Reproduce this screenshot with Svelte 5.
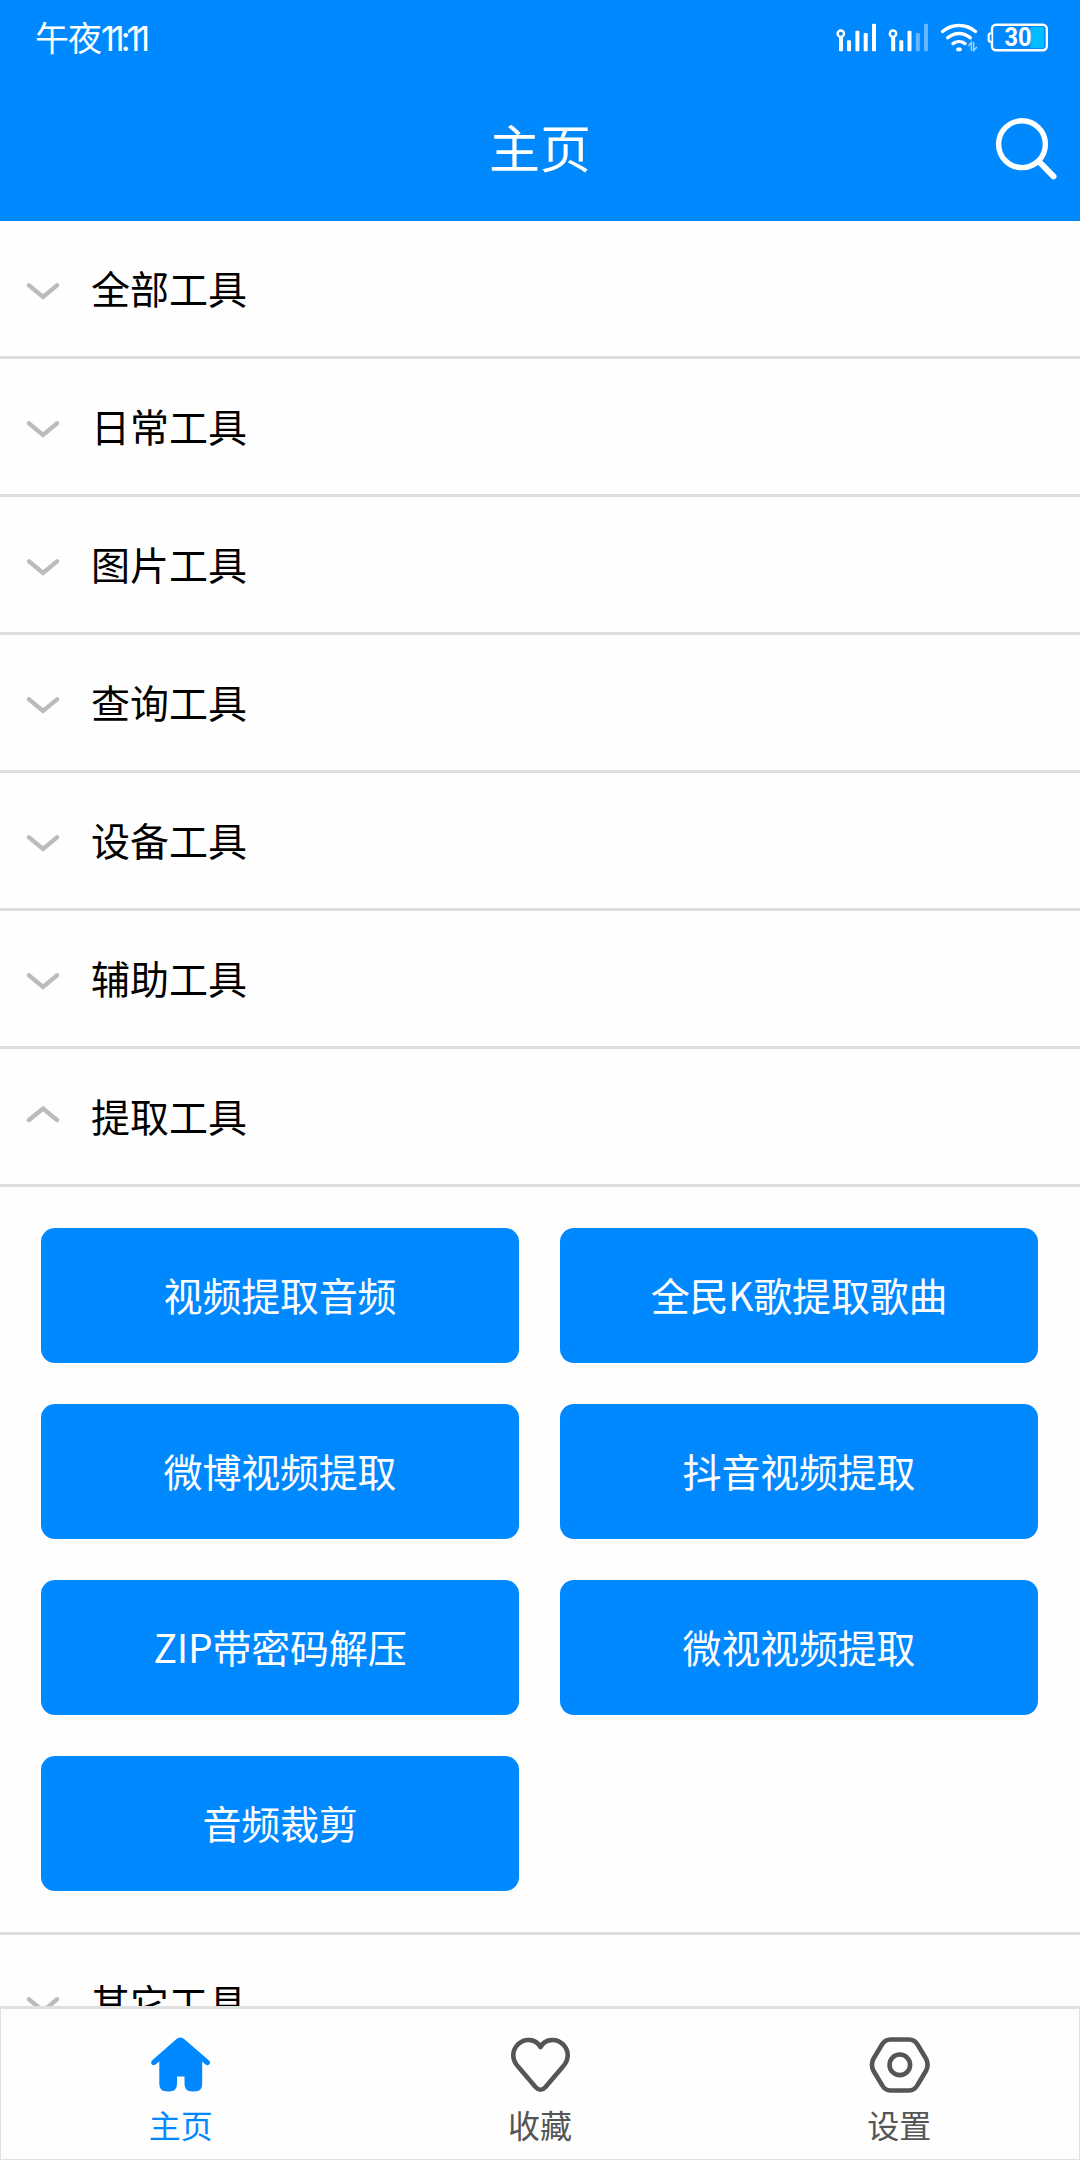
<script lang="ts">
  const before = [
    "全部工具",
    "日常工具",
    "图片工具",
    "查询工具",
    "设备工具",
    "辅助工具",
  ];

  let groups = $state([
    ...before.map((name) => ({ name, open: false, tools: [] as string[] })),
    {
      name: "提取工具",
      open: true,
      tools: [
        "视频提取音频",
        "全民K歌提取歌曲",
        "微博视频提取",
        "抖音视频提取",
        "ZIP带密码解压",
        "微视视频提取",
        "音频裁剪",
      ],
    },
    { name: "其它工具", open: false, tools: [] as string[] },
  ]);

  const tabs = [
    { id: "home", label: "主页" },
    { id: "fav", label: "收藏" },
    { id: "settings", label: "设置" },
  ];
  let active = $state("home");
</script>

<div class="screen">
  <header>
    <div class="status">
      <span class="time">午夜<span class="digits">11:11</span></span>
      <svg class="indicators" width="216" height="36" viewBox="834 20 216 36">
        <!-- signal 1 -->
        <g fill="#fff">
          <circle cx="840.8" cy="33.7" r="3.2" fill="none" stroke="#fff" stroke-width="2.4" />
          <rect x="839" y="37" width="4" height="14.3" rx="1" />
          <rect x="847" y="40.3" width="4" height="11" rx="1" />
          <rect x="855.4" y="30.8" width="4" height="20.5" rx="1" />
          <rect x="863.7" y="33" width="4" height="18.3" rx="1" />
          <rect x="872" y="23.8" width="4" height="27.5" rx="1" />
        </g>
        <!-- signal 2 -->
        <g fill="#fff">
          <circle cx="893" cy="33.7" r="3.2" fill="none" stroke="#fff" stroke-width="2.4" />
          <rect x="891.2" y="37" width="4" height="14.3" rx="1" />
          <rect x="899.3" y="40.3" width="4" height="11" rx="1" />
          <rect x="907.5" y="30.8" width="4" height="20.5" rx="1" />
          <rect x="915.8" y="33" width="4" height="18.3" rx="1" opacity="0.4" />
          <rect x="924" y="23.8" width="4" height="27.5" rx="1" opacity="0.4" />
        </g>
        <!-- wifi -->
        <g fill="none" stroke="#fff" stroke-width="3.4" stroke-linecap="round">
          <path d="M942.5 31.5C952 23.5 966 23.5 975.5 31.5" />
          <path d="M947.7 37.8C954.5 32 963.5 32 970.3 37.8" />
          <path d="M953 43.6C956.5 41 961.5 41 965 43.6" />
        </g>
        <rect x="956.2" y="47.5" width="5.6" height="3.8" rx="1.6" fill="#fff" />
        <path d="M971.4 51V42.5L968.2 46M973.7 42V50.5L976.9 47" fill="none" stroke="#9fd3ff" stroke-width="1.5" />
        <!-- battery -->
        <rect x="1030.5" y="27" width="13.5" height="21" fill="#00bbff" />
        <rect x="992" y="24.8" width="54.8" height="25.4" rx="4" fill="none" stroke="#fff" stroke-width="2.4" />
        <path d="M991.5 33.5H990Q988.7 33.5 988.7 35V40Q988.7 41.6 990 41.6H991.5" fill="#0088ff" stroke="#fff" stroke-width="2.2" />
        <text x="1018" y="46.2" text-anchor="middle" textLength="27" lengthAdjust="spacingAndGlyphs">30</text>
      </svg>
    </div>
    <div class="bar">
      <h1>主页</h1>
      <button class="search" aria-label="搜索">
        <svg width="64" height="64" viewBox="0 0 64 64" fill="none" stroke="#fff" stroke-linecap="round">
          <circle cx="28" cy="27.2" r="23.4" stroke-width="5.4" />
          <path d="M45 44.500L59.500 59.300" stroke-width="6" />
        </svg>
      </button>
    </div>
  </header>

  <main>
    {#each groups as group}
      <button class="row" onclick={() => (group.open = !group.open)}>
        <svg width="34" height="25" viewBox="0 0 34 25" fill="none" stroke="#bbb" stroke-width="4.4" stroke-linecap="round">
          <path d={group.open ? "M3 16L17 4.6L31 16" : "M3 9.4L17 21L31 9.4"} />
        </svg>
        <span>{group.name}</span>
      </button>
      {#if group.open}
        <div class="panel">
          {#each group.tools as tool}
            <button class="tool">{tool}</button>
          {/each}
        </div>
      {/if}
    {/each}
  </main>

  <nav>
    {#each tabs as tab}
      <button class="tab" class:active={active === tab.id} onclick={() => (active = tab.id)}>
        <svg width="64" height="60" viewBox="0 0 64 60" fill="none" stroke="currentColor" stroke-width="4.6" stroke-linejoin="round" stroke-linecap="round">
          {#if tab.id === "home"}
            <path
              d="M27.200 4.200Q31.300 0.800 35.400 4.200L60 25.500Q62 27.500 60.300 29.300Q58.500 31 56.500 29.400L53.200 26.600V49Q53.200 56.500 45.500 56.500H43.500Q35.500 56.500 35.500 49V41.500H28V49Q28 56.500 20 56.500H18.500Q10.300 56.500 10.300 49V26.600L6.500 29.400Q4.300 31 2.700 29.300Q1.200 27.500 3 25.500Z"
              fill="currentColor"
              stroke="none"
            />
          {:else if tab.id === "fav"}
            <path d="M32.500 12C28 4 17 2.500 9.800 9.500C3.500 16 4 25 10 31.500L27.500 52Q32.500 57.500 37.500 52L55 31.500C61 25 61.500 16 55.200 9.500C48 2.500 37 4 32.500 12Z" />
          {:else}
            <path d="M23.500 4.500H42Q47.500 4.500 50.500 9.500L59.200 24Q62 29.800 59.200 35.500L50.500 50Q47.500 55.500 42 55.500H23.500Q18 55.500 15 50L6.300 35.500Q3.600 29.800 6.300 24L15 9.500Q18 4.500 23.500 4.500Z" />
            <circle cx="32.800" cy="29.800" r="10.300" />
          {/if}
        </svg>
        <span>{tab.label}</span>
      </button>
    {/each}
  </nav>
</div>

<style>
  :global(body) {
    background: #fff;
  }

  .screen {
    display: flex;
    flex-direction: column;
    height: 2160px;
    width: 1080px;
    overflow: hidden;
    background: #fefefe;
    font-family: "Noto Sans CJK SC", sans-serif;
  }

  button {
    margin: 0;
    padding: 0;
    border: 0;
    background: none;
    font: inherit;
    color: inherit;
  }

  svg {
    display: block;
    flex: none;
  }

  header {
    flex: none;
    height: 221px;
    background: #0088ff;
    color: #fff;
  }

  .status {
    display: flex;
    align-items: center;
    justify-content: space-between;
    height: 76px;
    padding: 0 30px 0 35px;
  }

  .time {
    font-size: 34px;
    line-height: 74px;
    letter-spacing: -1px;
  }

  .digits {
    font-family: "Inter", sans-serif;
    font-size: 34px;
    letter-spacing: -4px;
  }

  .indicators text {
    font: 700 25px "Roboto", sans-serif;
    fill: #fff;
  }

  .bar {
    display: grid;
    grid-template-columns: 1fr auto 1fr;
    align-items: center;
    height: 145px;
    padding: 0 22px;
  }

  h1 {
    grid-column: 2;
    margin: 0;
    font-size: 51px;
    font-weight: 400;
    line-height: 141px;
    padding-bottom: 4px;
  }

  .search {
    justify-self: end;
  }

  main {
    flex: 1;
    min-height: 0;
    overflow: hidden;
  }

  .row {
    display: flex;
    align-items: center;
    gap: 31px;
    box-sizing: border-box;
    width: 100%;
    height: 138px;
    padding-left: 26px;
    border-bottom: 3px solid #dedede;
    color: #000;
    font-size: 39px;
  }

  .row span {
    padding-bottom: 4px;
  }

  .panel {
    display: grid;
    grid-template-columns: 478px 478px;
    gap: 41px;
    padding: 41px;
    border-bottom: 3px solid #dedede;
  }

  .tool {
    height: 135px;
    padding-bottom: 4px;
    border-radius: 14px;
    background: #0088ff;
    color: #fff;
    font-size: 39px;
    letter-spacing: -0.2px;
  }

  nav {
    display: flex;
    flex: none;
    box-sizing: border-box;
    height: 154px;
    border: 1px solid #e0e0e0;
    border-top-width: 3px;
  }

  .tab {
    display: flex;
    flex: 1;
    flex-direction: column;
    align-items: center;
    padding-top: 26px;
    color: #555;
    font-size: 32px;
    line-height: 58px;
  }

  .tab.active {
    color: #0088ff;
  }
</style>
